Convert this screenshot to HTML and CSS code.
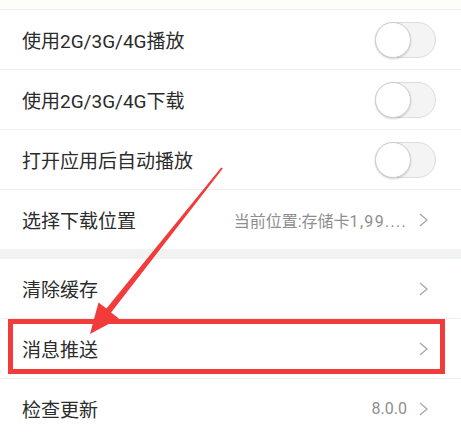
FILE: index.html
```html
<!DOCTYPE html>
<html lang="zh-CN">
<head>
<meta charset="utf-8">
<title>设置</title>
<link rel="stylesheet" href="styles.css">
</head>
<body>
<div class="screen">
  <div class="top-strip"></div>
  <div class="group">
    <div class="row">
      <span class="label">使用2G/3G/4G播放</span>
      <span class="switch"><span class="knob"></span></span>
    </div>
    <div class="row">
      <span class="label">使用2G/3G/4G下载</span>
      <span class="switch"><span class="knob"></span></span>
    </div>
    <div class="row">
      <span class="label">打开应用后自动播放</span>
      <span class="switch"><span class="knob"></span></span>
    </div>
    <div class="row row-last">
      <span class="label">选择下载位置</span>
      <span class="value"><span>当前位置:存储卡<span class="num">1,99....</span></span><svg class="chev" viewBox="0 0 9 14"><path d="M1 1 L8 7 L1 13" /></svg></span>
    </div>
  </div>
  <div class="band"></div>
  <div class="group">
    <div class="row">
      <span class="label">清除缓存</span>
      <span class="value"><svg class="chev" viewBox="0 0 9 14"><path d="M1 1 L8 7 L1 13" /></svg></span>
    </div>
    <div class="row highlight">
      <span class="label">消息推送</span>
      <span class="value"><svg class="chev" viewBox="0 0 9 14"><path d="M1 1 L8 7 L1 13" /></svg></span>
    </div>
    <div class="row row-last">
      <span class="label">检查更新</span>
      <span class="value">8.0.0<svg class="chev" viewBox="0 0 9 14"><path d="M1 1 L8 7 L1 13" /></svg></span>
    </div>
  </div>
  <svg class="arrow" viewBox="0 0 461 436" width="461" height="436">
    <polygon points="90,334 98.5,302.4 106.4,308.6 221.2,167.4 222.8,168.6 111.1,312.4 118.9,318.6" />
  </svg>
</div>
</body>
</html>
```

FILE: styles.css
```css
html, body {
  margin: 0;
  padding: 0;
  background: #ffffff;
}

.screen {
  position: relative;
  width: 461px;
  height: 436px;
  overflow: hidden;
  background: #ffffff;
  font-family: Roboto, "Noto Sans CJK SC", sans-serif;
}

.top-strip {
  height: 9px;
  background: #fdfdfa;
  border-bottom: 1px solid #f0f0ea;
}

.group {
  display: flex;
  flex-direction: column;
}

.row {
  height: 59px;
  display: flex;
  align-items: center;
  justify-content: space-between;
  padding: 0 25px 0 22px;
  border-bottom: 1px solid #f0f0f0;
}

.row-last {
  border-bottom: none;
}

.label {
  font-size: 19px;
  color: #2b2b2b;
}

.value {
  display: flex;
  align-items: center;
  gap: 12px;
  font-size: 16px;
  color: #8e8e8e;
  margin-right: 8px;
}

.num {
  letter-spacing: 1.3px;
}

.chev {
  width: 9px;
  height: 14px;
  fill: none;
  stroke: #a8a8a8;
  stroke-width: 1.4;
}

.switch {
  position: relative;
  width: 61px;
  height: 36px;
  box-sizing: border-box;
  border: 1px solid #dcdcdc;
  border-radius: 18px;
  background: #f4f4f4;
}

.knob {
  position: absolute;
  left: -1px;
  top: -1px;
  width: 36px;
  height: 36px;
  box-sizing: border-box;
  border-radius: 50%;
  background: #ffffff;
  border: 1.5px solid #cfcfcf;
  box-shadow: 0 1px 2px rgba(0, 0, 0, 0.18);
}

.band {
  height: 10px;
  background: #f1f2f2;
}

.highlight {
  position: relative;
}

.highlight::after {
  content: "";
  position: absolute;
  left: 8px;
  right: 16px;
  top: 0;
  bottom: 4px;
  border: 5px solid #f23b3b;
  pointer-events: none;
}

.arrow {
  position: absolute;
  left: 0;
  top: 0;
  pointer-events: none;
}

.arrow polygon {
  fill: #f23b3b;
}
```
